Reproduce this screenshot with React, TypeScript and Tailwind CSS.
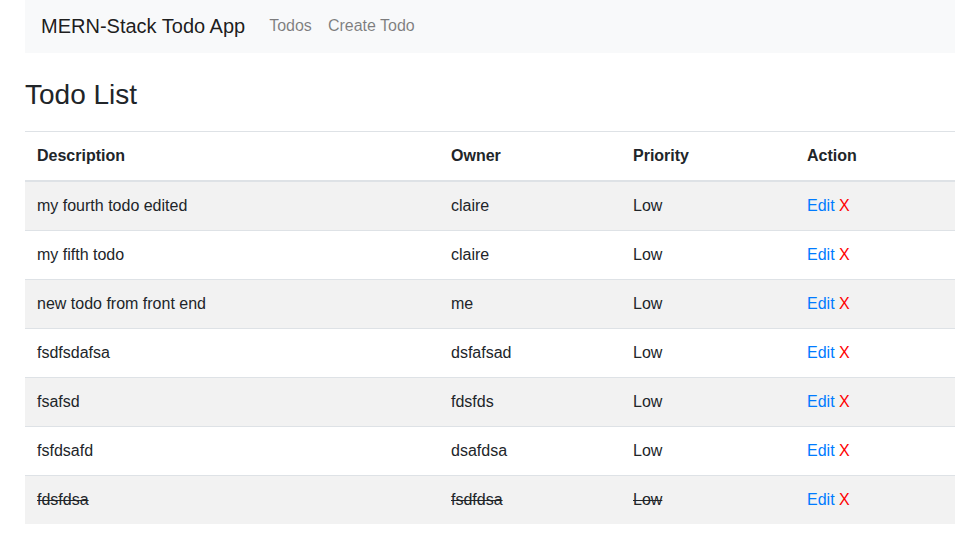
const todos = [
  { description: 'my fourth todo edited', owner: 'claire', priority: 'Low', completed: false },
  { description: 'my fifth todo', owner: 'claire', priority: 'Low', completed: false },
  { description: 'new todo from front end', owner: 'me', priority: 'Low', completed: false },
  { description: 'fsdfsdafsa', owner: 'dsfafsad', priority: 'Low', completed: false },
  { description: 'fsafsd', owner: 'fdsfds', priority: 'Low', completed: false },
  { description: 'fsfdsafd', owner: 'dsafdsa', priority: 'Low', completed: false },
  { description: 'fdsfdsa', owner: 'fsdfdsa', priority: 'Low', completed: true },
];

export default function App() {
  return (
    <div className="min-h-screen bg-white text-[#212529] font-['Liberation_Sans',Arial,sans-serif] text-base">
      <div className="mx-[25px] w-[930px]">
        {/* Navbar */}
        <nav className="flex items-center h-[53px] bg-[#f8f9fa] px-4 pb-[2px]">
          <a href="#" className="text-[20px] leading-[30px] text-black/90 mr-4">MERN-Stack Todo App</a>
          <a href="#" className="px-2 text-black/50 leading-6">Todos</a>
          <a href="#" className="px-2 text-black/50 leading-6">Create Todo</a>
        </nav>

        <h3 className="text-[28px] leading-[1.2] mt-[25px] mb-[19px] font-normal">Todo List</h3>

        <table className="w-full border-collapse">
          <thead>
            <tr className="border-t border-[#dee2e6] border-b-2">
              <th className="w-[414px] text-left font-bold p-3 leading-6">Description</th>
              <th className="w-[182px] text-left font-bold p-3 leading-6">Owner</th>
              <th className="w-[174px] text-left font-bold p-3 leading-6">Priority</th>
              <th className="text-left font-bold p-3 leading-6">Action</th>
            </tr>
          </thead>
          <tbody>
            {todos.map((todo, i) => (
              <tr key={i} className={`border-t border-[#dee2e6] ${i % 2 === 0 ? 'bg-[#f2f2f2]' : 'bg-white'}`}>
                <td className={`p-3 leading-6 ${todo.completed ? 'line-through' : ''}`}>{todo.description}</td>
                <td className={`p-3 leading-6 ${todo.completed ? 'line-through' : ''}`}>{todo.owner}</td>
                <td className={`p-3 leading-6 ${todo.completed ? 'line-through' : ''}`}>{todo.priority}</td>
                <td className="p-3 leading-6">
                  <a href="#" className="text-[#007bff]">Edit</a>{' '}
                  <span className="text-[#ff0000]">X</span>
                </td>
              </tr>
            ))}
          </tbody>
        </table>
      </div>
    </div>
  );
}
